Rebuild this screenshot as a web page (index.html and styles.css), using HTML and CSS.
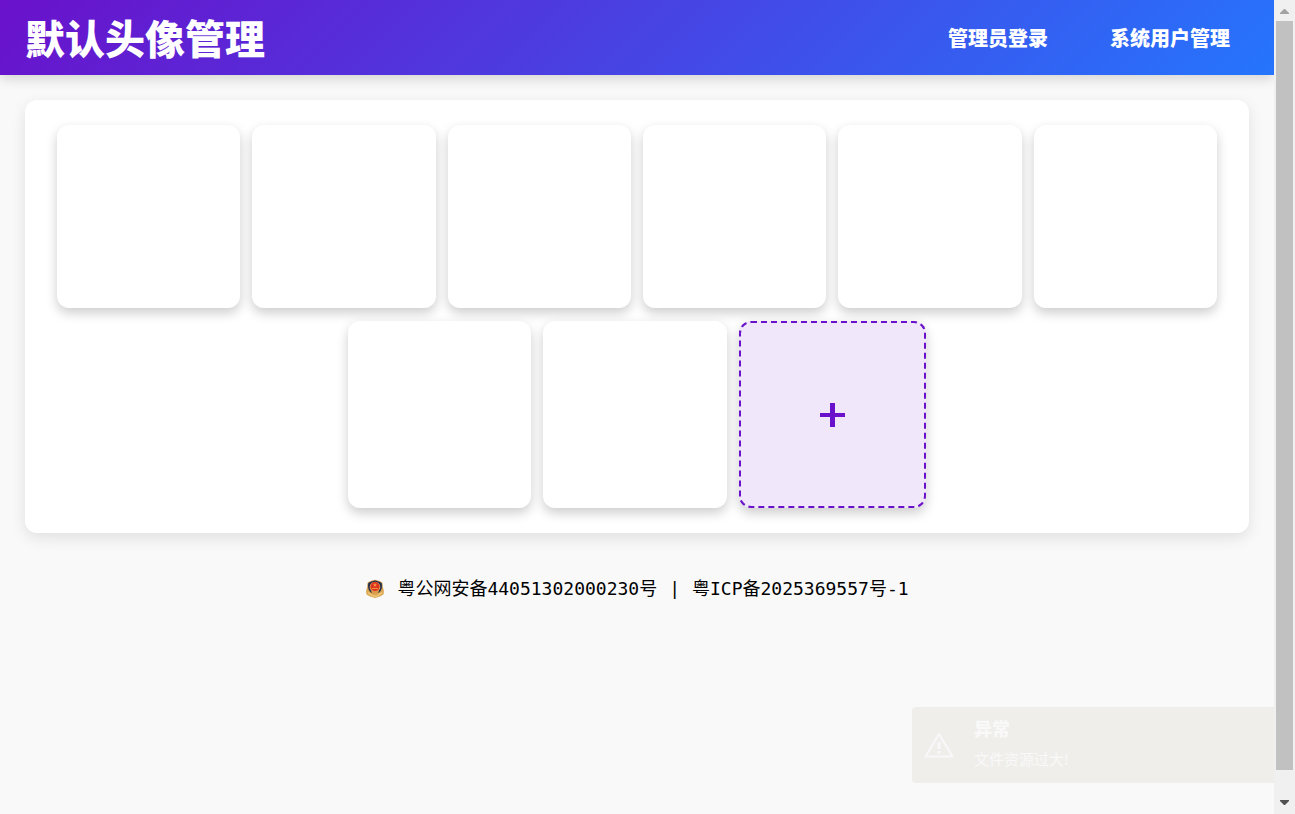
FILE: index.html
```html
<!DOCTYPE html>
<html lang="zh-CN">
<head>
<meta charset="utf-8">
<meta name="viewport" content="width=device-width, initial-scale=1">
<title>默认头像管理</title>
<link rel="stylesheet" href="styles.css">
</head>
<body>
<div class="page">
  <header class="header">
    <h1 class="title">默认头像管理</h1>
    <nav class="nav">
      <a class="nav-link" href="#login">管理员登录</a>
      <a class="nav-link" href="#users">系统用户管理</a>
    </nav>
  </header>
  <main class="panel">
    <div class="tile"></div>
    <div class="tile"></div>
    <div class="tile"></div>
    <div class="tile"></div>
    <div class="tile"></div>
    <div class="tile"></div>
    <div class="tile"></div>
    <div class="tile"></div>
    <button class="tile tile-add" type="button" aria-label="添加头像">
      <svg width="25" height="24" viewBox="0 0 25 24" aria-hidden="true"><path d="M10 0h5v10h10v4H15v10h-5V14H0v-4h10z" fill="#6a11cb"/></svg>
    </button>
  </main>
  <footer class="footer">
    <svg class="badge" width="20" height="20" viewBox="0 0 20 20" aria-hidden="true">
      <path d="M2.500 8C1 10 .8 13 1.500 15.500L5 17.500l5 1.500 5-1.500 3.500-2C19.200 13 19 10 17.500 8z" fill="#dda956"/>
      <path d="M3 13.500l4 3 3 .8 3-.8 4-3" fill="none" stroke="#f0cd80" stroke-width="1.200"/>
      <path d="M10 .8C7.500 1.300 5 2 2.800 3.600 1.500 8 2.500 12 5.500 14h9c3-2 4-6 2.700-10.400C15 2 12.500 1.300 10 .8z" fill="#c99b55"/>
      <path d="M10 1.400C7.500 2 5.200 2.600 3.400 4 2.400 8 3.600 11.800 6 13.500h8c2.400-1.700 3.600-5.500 2.600-9.500C14.800 2.600 12.500 2 10 1.400z" fill="#252d48"/>
      <circle cx="10" cy="8" r="5.300" fill="#e4a04f"/>
      <circle cx="10" cy="7.600" r="4.500" fill="#df3322"/>
      <path d="M10 4l.6 1.200 1.400.2-1 1 .2 1.300-1.200-.6-1.200.6.2-1.300-1-1 1.400-.2zM7 9h6v1H7z" fill="#f0943a"/>
      <path d="M6 12h8l-1.500 2.500h-5z" fill="#d99a4a"/>
    </svg>
    <a class="footer-link" href="#police">粤公网安备44051302000230号</a>
    <span>|</span>
    <a class="footer-link" href="#icp">粤ICP备2025369557号-1</a>
  </footer>
  <aside class="toast" role="alert">
    <svg class="toast-icon" width="30" height="26" viewBox="0 0 30 26" aria-hidden="true"><path d="M15 2 28.500 24.500H1.500z" fill="none" stroke="#f8f8fa" stroke-width="2" stroke-linejoin="round"/><path d="M15 10v7m0 2v2.500" stroke="#f8f8fa" stroke-width="3"/></svg>
    <div class="toast-body">
      <strong class="toast-title">异常</strong>
      <span class="toast-text">文件资源过大!</span>
    </div>
  </aside>
</div>
<div class="scrollbar" aria-hidden="true">
  <svg class="arrow" width="9" height="5" viewBox="0 0 9 5"><path d="M4 0h1l4 4v1H0V4z" fill="#a3a3a3"/></svg>
  <div class="track"><div class="thumb"></div></div>
  <svg class="arrow" width="9" height="5" viewBox="0 0 9 5"><path d="M0 0h9v1L5 5H4L0 1z" fill="#505050"/></svg>
</div>
</body>
</html>
```
FILE: styles.css
```css
* {
  box-sizing: border-box;
}

body {
  display: flex;
  margin: 0;
  background: #f9f9f9;
  color: #000;
  font-family: "Noto Sans CJK SC", sans-serif;
}

.page {
  position: relative;
  flex: 1;
  min-width: 0;
  min-height: 100vh;
  overflow: hidden;
}

.header {
  display: flex;
  align-items: center;
  justify-content: space-between;
  padding: 8px 44px 9px 25px;
  background: linear-gradient(135deg, #6a11cb, #2575fc);
  box-shadow: 0 4px 12px rgba(0, 0, 0, 0.15);
  color: #fff;
}

.title {
  margin: 0;
  font-size: 40px;
  font-weight: 900;
  line-height: 58px;
}

.nav {
  display: flex;
  gap: 62px;
  padding-top: 2px;
}

.nav-link {
  color: inherit;
  font-size: 20px;
  font-weight: 900;
  line-height: 30px;
  text-decoration: none;
}

.panel {
  display: flex;
  flex-wrap: wrap;
  justify-content: center;
  gap: 13px 12px;
  margin: 25px;
  padding: 25px 30px;
  border-radius: 12px;
  background: #fff;
  box-shadow: 0 5px 15px rgba(0, 0, 0, 0.1);
}

.tile {
  box-sizing: content-box;
  width: calc((100% - 64px) / 6);
  min-height: 183px;
  border-radius: 12px;
  background: #fff;
  box-shadow: 0 5px 12px rgba(0, 0, 0, 0.2);
}

.tile-add {
  display: flex;
  align-items: center;
  justify-content: center;
  padding: 0;
  aspect-ratio: 1;
  border: 2px dashed #6a11cb;
  background: #f0e7fa;
  cursor: pointer;
}

.footer {
  display: flex;
  align-items: center;
  justify-content: center;
  gap: 12px;
  padding: 18px 25px;
  font-family: "DejaVu Sans Mono", "Noto Sans CJK SC", monospace;
  font-size: 18px;
  line-height: 26px;
}

.footer-link {
  color: inherit;
  text-decoration: none;
}

.toast {
  position: absolute;
  right: 0;
  bottom: 31px;
  display: flex;
  align-items: center;
  gap: 20px;
  width: 362px;
  padding: 7px 12px 11px;
  border-radius: 4px 0 0 4px;
  background: #efeeea;
  color: #f9f9f9;
}

.toast-icon {
  margin-top: 4px;
}

.toast-body {
  display: flex;
  flex-direction: column;
  gap: 4px;
}

.toast-title {
  font-size: 18px;
  font-weight: 900;
  line-height: 28px;
}

.toast-text {
  font-size: 15px;
  line-height: 26px;
}

.scrollbar {
  position: sticky;
  top: 0;
  display: flex;
  flex-direction: column;
  align-items: center;
  gap: 7px;
  width: 21px;
  height: 100vh;
  padding: 9px 2px;
  background: #f0f0f0;
}

.track {
  flex: 1;
  width: 100%;
}

.thumb {
  height: 97%;
  background: #c1c1c1;
}
```
